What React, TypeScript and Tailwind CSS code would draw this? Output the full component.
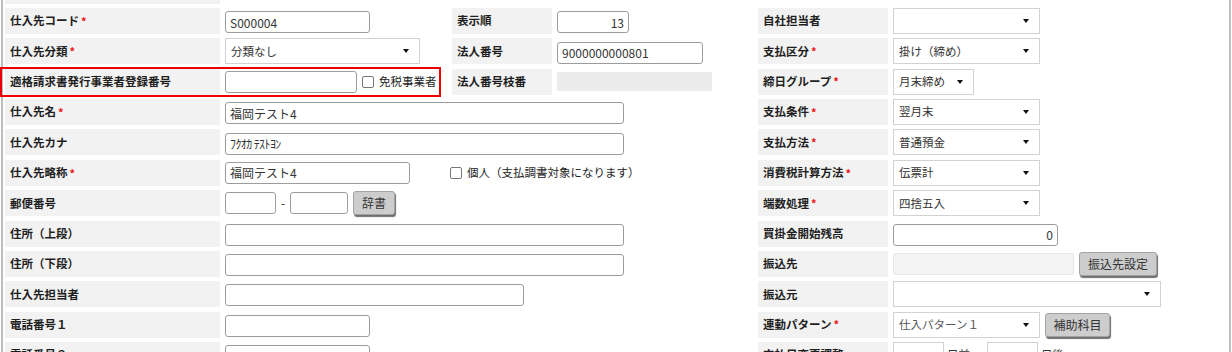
const Label = ({ text, req, w = "w-[215px]", ml = "ml-[2px]" }: { text: string; req?: boolean; w?: string; ml?: string }) => (
  <div className={`${ml} ${w} flex h-full shrink-0 items-center bg-[#f2f2f2] pl-[5px] text-[11.5px] font-bold text-[#1e1e1e]`}>
    {text}
    {req && <span className="ml-[2px] text-[11px] font-bold text-[#ee1111]">*</span>}
  </div>
);

const Input = ({ value = "", w, right, tight }: { value?: string; w: string; right?: boolean; tight?: boolean }) => (
  <input
    readOnly
    defaultValue={value}
    className={`${w} h-[22px] shrink-0 rounded-[3px] border border-[#9c9c9c] bg-white px-[4px] text-[12px] text-[#333] outline-none ${right ? "text-right" : ""} ${tight ? "tracking-[-0.6px]" : ""}`}
  />
);

const Select = ({ value = "", w, muted }: { value?: string; w: string; muted?: boolean }) => (
  <div className={`${w} flex h-[26px] shrink-0 items-center justify-between border border-[#d2d2d2] bg-white pl-[5px] pr-[10px] text-[11.5px] ${muted ? "text-[#555]" : "text-[#333]"}`}>
    <span>{value}</span>
    <span className="h-0 w-0 border-x-[3px] border-t-[4px] border-x-transparent border-t-[#111]" />
  </div>
);

const Button = ({ text, w }: { text: string; w: string }) => (
  <div className={`${w} flex h-[24px] shrink-0 items-center justify-center rounded-[3px] border border-[#a3a3a3] bg-[#cdcdcd] text-[12px] text-[#333] shadow-[1px_2px_1px_#6f6f6f]`}>
    {text}
  </div>
);

const Check = ({ text }: { text: string }) => (
  <div className="flex items-center text-[11.5px] text-[#222]">
    <span className="h-[12px] w-[12px] rounded-[2px] border border-[#777] bg-white" />
    <span className="ml-[5px]">{text}</span>
  </div>
);

const Row = ({ children, className = "" }: { children: React.ReactNode; className?: string }) => (
  <div className={`flex h-[26px] shrink-0 items-center ${className}`}>{children}</div>
);

export default function App() {
  return (
    <div className="h-[352px] w-[1232px] overflow-hidden bg-white font-['Noto_Sans_CJK_JP','Meiryo_UI',sans-serif]">
      <div className="ml-[1px] flex h-[352px] w-[1230px] border-x-2 border-[#bdbdbd]">
        {/* left + middle */}
        <div className="flex w-[737px] shrink-0 flex-col gap-[4.36px]">
          <div className="ml-[2px] h-[3.64px] w-[215px] shrink-0 bg-[#f2f2f2]" />
          <Row>
            <Label text="仕入先コード" req />
            <div className="ml-[5px] w-[227px] shrink-0">
              <Input value="S000004" w="w-[145px]" />
            </div>
            <Label text="表示順" w="w-[100px]" ml="ml-0" />
            <div className="ml-[5px]">
              <Input value="13" w="w-[72px]" right />
            </div>
          </Row>
          <Row>
            <Label text="仕入先分類" req />
            <div className="ml-[5px] w-[227px] shrink-0">
              <Select value="分類なし" w="w-[195px]" />
            </div>
            <Label text="法人番号" w="w-[100px]" ml="ml-0" />
            <div className="ml-[5px]">
              <Input value="9000000000801" w="w-[146px]" />
            </div>
          </Row>
          <Row className="relative">
            <Label text="適格請求書発行事業者登録番号" />
            <div className="ml-[5px] flex w-[227px] shrink-0 items-center gap-[5px]">
              <Input w="w-[132px]" />
              <Check text="免税事業者" />
            </div>
            <Label text="法人番号枝番" w="w-[100px]" ml="ml-0" />
            <div className="ml-[5px] h-[19px] w-[155px] bg-[#ebebeb]" />
            <div className="absolute -left-[3px] -top-[2px] h-[30px] w-[441px] border-2 border-[#ee0000]" />
          </Row>
          <Row>
            <Label text="仕入先名" req />
            <div className="ml-[5px]">
              <Input value="福岡テスト4" w="w-[399px]" />
            </div>
          </Row>
          <Row>
            <Label text="仕入先カナ" />
            <div className="ml-[5px]">
              <Input value="ﾌｸｵｶ ﾃｽﾄﾖﾝ" w="w-[399px]" tight />
            </div>
          </Row>
          <Row>
            <Label text="仕入先略称" req />
            <div className="ml-[5px] flex items-center">
              <Input value="福岡テスト4" w="w-[185px]" />
              <div className="ml-[40px]">
                <Check text="個人（支払調書対象になります）" />
              </div>
            </div>
          </Row>
          <Row>
            <Label text="郵便番号" />
            <div className="ml-[5px] flex items-center">
              <Input w="w-[51px]" />
              <span className="w-[14px] text-center text-[12px] text-[#333]">-</span>
              <Input w="w-[58px]" />
              <div className="ml-[5px]">
                <Button text="辞書" w="w-[42px]" />
              </div>
            </div>
          </Row>
          <Row>
            <Label text="住所（上段）" />
            <div className="ml-[5px]">
              <Input w="w-[399px]" />
            </div>
          </Row>
          <Row>
            <Label text="住所（下段）" />
            <div className="ml-[5px]">
              <Input w="w-[399px]" />
            </div>
          </Row>
          <Row>
            <Label text="仕入先担当者" />
            <div className="ml-[5px]">
              <Input w="w-[299px]" />
            </div>
          </Row>
          <Row>
            <Label text="電話番号１" />
            <div className="ml-[5px]">
              <Input w="w-[145px]" />
            </div>
          </Row>
          <Row>
            <Label text="電話番号２" />
            <div className="ml-[5px]">
              <Input w="w-[145px]" />
            </div>
          </Row>
        </div>

        {/* right */}
        <div className="flex flex-1 flex-col gap-[4.36px] pt-[8px]">
          <Row>
            <Label text="自社担当者" w="w-[130px]" ml="ml-[18px]" />
            <div className="ml-[5px]">
              <Select w="w-[147px]" />
            </div>
          </Row>
          <Row>
            <Label text="支払区分" req w="w-[130px]" ml="ml-[18px]" />
            <div className="ml-[5px]">
              <Select value="掛け（締め）" w="w-[147px]" />
            </div>
          </Row>
          <Row>
            <Label text="締日グループ" req w="w-[130px]" ml="ml-[18px]" />
            <div className="ml-[5px]">
              <Select value="月末締め" w="w-[81px]" />
            </div>
          </Row>
          <Row>
            <Label text="支払条件" req w="w-[130px]" ml="ml-[18px]" />
            <div className="ml-[5px]">
              <Select value="翌月末" w="w-[147px]" />
            </div>
          </Row>
          <Row>
            <Label text="支払方法" req w="w-[130px]" ml="ml-[18px]" />
            <div className="ml-[5px]">
              <Select value="普通預金" w="w-[147px]" />
            </div>
          </Row>
          <Row>
            <Label text="消費税計算方法" req w="w-[130px]" ml="ml-[18px]" />
            <div className="ml-[5px]">
              <Select value="伝票計" w="w-[147px]" />
            </div>
          </Row>
          <Row>
            <Label text="端数処理" req w="w-[130px]" ml="ml-[18px]" />
            <div className="ml-[5px]">
              <Select value="四捨五入" w="w-[147px]" />
            </div>
          </Row>
          <Row>
            <Label text="買掛金開始残高" w="w-[130px]" ml="ml-[18px]" />
            <div className="ml-[5px]">
              <Input value="0" w="w-[165px]" right />
            </div>
          </Row>
          <Row>
            <Label text="振込先" w="w-[130px]" ml="ml-[18px]" />
            <div className="ml-[5px] flex items-center gap-[5px]">
              <div className="h-[22px] w-[181px] rounded-[2px] border border-[#e6e6e6] bg-[#f4f4f4]" />
              <Button text="振込先設定" w="w-[78px]" />
            </div>
          </Row>
          <Row>
            <Label text="振込元" w="w-[130px]" ml="ml-[18px]" />
            <div className="ml-[5px]">
              <Select w="w-[268px]" />
            </div>
          </Row>
          <Row>
            <Label text="連動パターン" req w="w-[130px]" ml="ml-[18px]" />
            <div className="ml-[5px] flex items-center gap-[5px]">
              <Select value="仕入パターン１" w="w-[147px]" muted />
              <Button text="補助科目" w="w-[65px]" />
            </div>
          </Row>
          <Row>
            <Label text="支払日変更調整" w="w-[130px]" ml="ml-[18px]" />
            <div className="ml-[5px] flex items-center text-[11.5px] text-[#333]">
              <Select w="w-[51px]" />
              <span className="ml-[3px] w-[40px]">日前</span>
              <Select w="w-[51px]" />
              <span className="ml-[3px]">日後</span>
            </div>
          </Row>
        </div>
      </div>
    </div>
  );
}
